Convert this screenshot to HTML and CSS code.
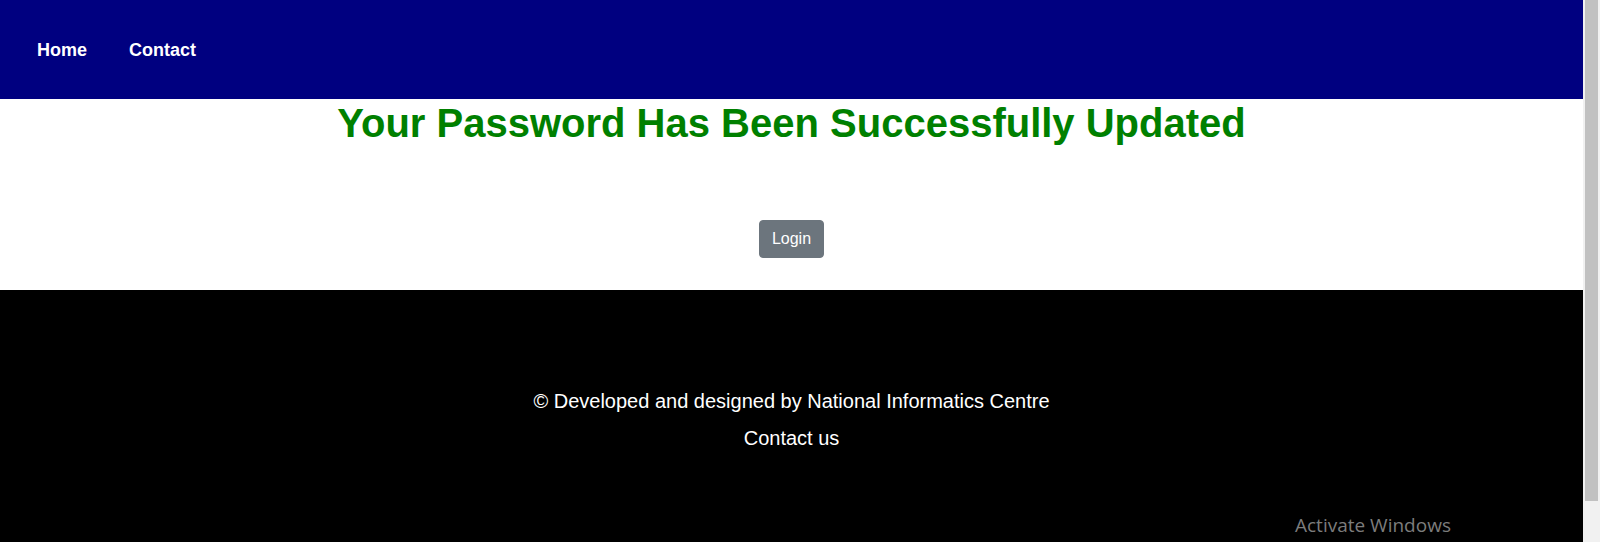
FILE: index.html
```html
<!DOCTYPE html>
<html lang="en">
<head>
<meta charset="utf-8">
<title>Password Updated</title>
<link rel="stylesheet" href="styles.css">
</head>
<body>
<div class="viewport">
  <div class="page">
    <header class="topbar">
      <nav class="nav">
        <a class="nav-link" href="#">Home</a>
        <a class="nav-link" href="#">Contact</a>
      </nav>
    </header>
    <main class="content">
      <h1 class="title">Your Password Has Been Successfully Updated</h1>
      <button class="btn-login" type="button">Login</button>
    </main>
    <footer class="footer">
      <p class="footer-line">© Developed and designed by National Informatics Centre</p>
      <p class="footer-line">Contact us</p>
      <div class="activate">Activate Windows</div>
    </footer>
  </div>
  <div class="scrollbar"><div class="scroll-thumb"></div></div>
</div>
</body>
</html>
```

FILE: styles.css
```css
html, body {
  margin: 0;
  padding: 0;
  height: 100%;
  overflow: hidden;
}
body {
  font-family: "Liberation Sans", Arial, sans-serif;
  background: #ffffff;
}
.viewport {
  display: flex;
  height: 542px;
  width: 1600px;
}
.page {
  flex: 1;
  display: flex;
  flex-direction: column;
  min-width: 0;
}
.topbar {
  background: #000080;
  height: 99px;
  display: flex;
  align-items: center;
  flex-shrink: 0;
}
.nav {
  display: flex;
  gap: 42px;
  padding-left: 37px;
  padding-top: 1px;
}
.nav-link {
  color: #ffffff;
  font-weight: bold;
  font-size: 18px;
  text-decoration: none;
}
.content {
  height: 191px;
  display: flex;
  flex-direction: column;
  align-items: center;
  flex-shrink: 0;
}
.title {
  color: #008000;
  font-size: 40px;
  font-weight: bold;
  line-height: 46px;
  margin: 1px 0 0 0;
  text-align: center;
}
.btn-login {
  margin-top: 74px;
  background: #6c757d;
  color: #ffffff;
  border: 1px solid #6c757d;
  border-radius: 4px;
  font-family: "Liberation Sans", Arial, sans-serif;
  font-size: 16px;
  line-height: 24px;
  padding: 6px 12px;
  height: 38px;
  display: flex;
  align-items: center;
}
.footer {
  flex: 1;
  background: #000000;
  display: flex;
  flex-direction: column;
  align-items: center;
  padding-top: 100px;
  gap: 14px;
  position: relative;
}
.footer-line {
  margin: 0;
  color: #ffffff;
  font-size: 20px;
  line-height: 23px;
}
.activate {
  position: absolute;
  left: 1295px;
  top: 222px;
  color: #7c7c7c;
  font-family: "Open Sans", "Noto Sans", sans-serif;
  font-size: 19px;
  white-space: nowrap;
}
.scrollbar {
  width: 17px;
  flex-shrink: 0;
  background: #f1f1f1;
  padding: 0 2px;
  box-sizing: border-box;
}
.scroll-thumb {
  height: 501px;
  background: #c1c1c1;
}
```
